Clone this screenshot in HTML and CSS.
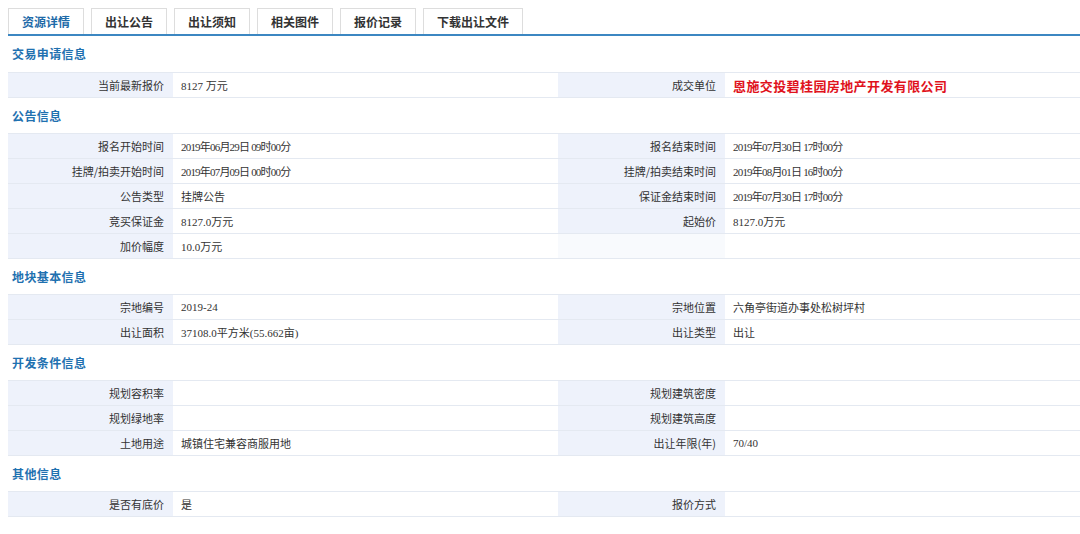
FILE: index.html
```html
<!DOCTYPE html>
<html lang="zh-CN">
<head>
<meta charset="utf-8">
<title>资源详情</title>
<link rel="stylesheet" href="styles.css">
</head>
<body>
<div class="page">
  <div class="tabs">
    <div class="tab active">资源详情</div>
    <div class="tab">出让公告</div>
    <div class="tab">出让须知</div>
    <div class="tab">相关图件</div>
    <div class="tab">报价记录</div>
    <div class="tab">下载出让文件</div>
  </div>

  <h2 class="sec-title first">交易申请信息</h2>
  <table class="info">
    <colgroup><col class="c-l1"><col class="c-v1"><col class="c-l2"><col class="c-v2"></colgroup>
    <tr>
      <td class="lbl">当前最新报价</td><td class="val">8127 万元</td>
      <td class="lbl">成交单位</td><td class="val"><span class="winner">恩施交投碧桂园房地产开发有限公司</span></td>
    </tr>
  </table>

  <h2 class="sec-title">公告信息</h2>
  <table class="info">
    <colgroup><col class="c-l1"><col class="c-v1"><col class="c-l2"><col class="c-v2"></colgroup>
    <tr>
      <td class="lbl">报名开始时间</td><td class="val date">2019年06月29日 09时00分</td>
      <td class="lbl">报名结束时间</td><td class="val date">2019年07月30日 17时00分</td>
    </tr>
    <tr>
      <td class="lbl">挂牌/拍卖开始时间</td><td class="val date">2019年07月09日 00时00分</td>
      <td class="lbl">挂牌/拍卖结束时间</td><td class="val date">2019年08月01日 16时00分</td>
    </tr>
    <tr>
      <td class="lbl">公告类型</td><td class="val">挂牌公告</td>
      <td class="lbl">保证金结束时间</td><td class="val date">2019年07月30日 17时00分</td>
    </tr>
    <tr>
      <td class="lbl">竞买保证金</td><td class="val">8127.0万元</td>
      <td class="lbl">起始价</td><td class="val">8127.0万元</td>
    </tr>
    <tr>
      <td class="lbl">加价幅度</td><td class="val">10.0万元</td>
      <td class="lbl empty"></td><td class="val"></td>
    </tr>
  </table>

  <h2 class="sec-title">地块基本信息</h2>
  <table class="info">
    <colgroup><col class="c-l1"><col class="c-v1"><col class="c-l2"><col class="c-v2"></colgroup>
    <tr>
      <td class="lbl">宗地编号</td><td class="val">2019-24</td>
      <td class="lbl">宗地位置</td><td class="val">六角亭街道办事处松树坪村</td>
    </tr>
    <tr>
      <td class="lbl">出让面积</td><td class="val">37108.0平方米(55.662亩)</td>
      <td class="lbl">出让类型</td><td class="val">出让</td>
    </tr>
  </table>

  <h2 class="sec-title">开发条件信息</h2>
  <table class="info">
    <colgroup><col class="c-l1"><col class="c-v1"><col class="c-l2"><col class="c-v2"></colgroup>
    <tr>
      <td class="lbl">规划容积率</td><td class="val"></td>
      <td class="lbl">规划建筑密度</td><td class="val"></td>
    </tr>
    <tr>
      <td class="lbl">规划绿地率</td><td class="val"></td>
      <td class="lbl">规划建筑高度</td><td class="val"></td>
    </tr>
    <tr>
      <td class="lbl">土地用途</td><td class="val">城镇住宅兼容商服用地</td>
      <td class="lbl">出让年限(年)</td><td class="val">70/40</td>
    </tr>
  </table>

  <h2 class="sec-title">其他信息</h2>
  <table class="info">
    <colgroup><col class="c-l1"><col class="c-v1"><col class="c-l2"><col class="c-v2"></colgroup>
    <tr>
      <td class="lbl">是否有底价</td><td class="val">是</td>
      <td class="lbl">报价方式</td><td class="val"></td>
    </tr>
  </table>
</div>
</body>
</html>
```

FILE: styles.css
```css
html, body {
  margin: 0;
  padding: 0;
  background: #ffffff;
}

body {
  font-family: "Noto Sans CJK SC", "Liberation Sans", sans-serif;
  font-size: 11px;
  color: #333333;
  overflow: hidden;
}

.page {
  padding: 8px 0 0 8px;
}

.tabs {
  display: flex;
  gap: 7px;
  border-bottom: 2px solid #3c87c2;
}

.tab {
  height: 26px;
  box-sizing: border-box;
  padding: 0 13px;
  border: 1px solid #dddddd;
  border-bottom: none;
  background: #ffffff;
  font-size: 12px;
  font-weight: bold;
  line-height: 25px;
  color: #333333;
}

.tab.active {
  color: #1d6aa8;
}

.sec-title {
  margin: 0;
  height: 35px;
  line-height: 35px;
  padding-left: 4px;
  font-size: 12px;
  font-weight: bold;
  letter-spacing: 0.4px;
  color: #1f71b0;
}

.sec-title.first {
  height: 36px;
  line-height: 36px;
}

.info {
  width: 1072px;
  table-layout: fixed;
  border-collapse: collapse;
  border-spacing: 0;
}

.c-l1 { width: 165px; }
.c-v1 { width: 385px; }
.c-l2 { width: 167px; }

.info td {
  height: 24px;
  padding: 0;
  border-top: 1px solid #e4e9f1;
  border-bottom: 1px solid #e4e9f1;
  vertical-align: middle;
  white-space: nowrap;
}

.info td.lbl {
  background: #eef2fb;
  text-align: right;
  padding-right: 9px;
}

.info td.lbl.empty {
  background: #f8fafd;
}

.info td.val {
  padding-left: 8px;
  font-family: "Liberation Serif", "Noto Sans CJK SC", serif;
}

.info td.date {
  letter-spacing: -0.8px;
}

.winner {
  font-family: "Noto Sans CJK SC", sans-serif;
  font-size: 13px;
  font-weight: bold;
  letter-spacing: 0.4px;
  color: #e0121c;
}
```
